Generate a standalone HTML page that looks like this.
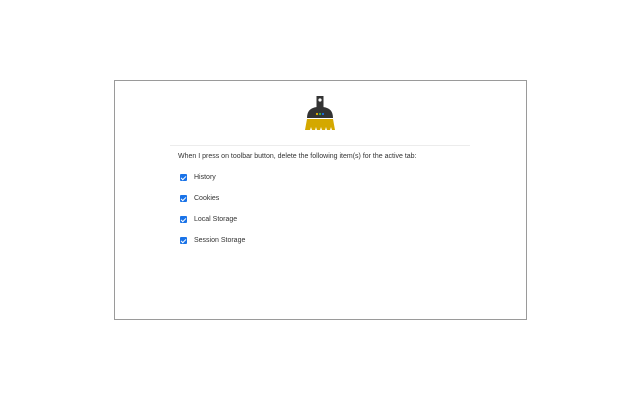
<!DOCTYPE html><html><head><style>
body{margin:0;width:640px;height:400px;background:#fff;position:relative;font-family:"Liberation Sans",sans-serif;}
.f{position:absolute;left:114px;top:80px;width:411px;height:238px;border:1px solid #9a9a9a;}
.sep{position:absolute;left:170px;top:145px;width:300px;height:1px;background:#ececec;}
.t{position:absolute;font-size:7px;color:#333;white-space:nowrap;}
.cb{position:absolute;left:180px;width:7px;height:7px;background:#1a73e8;border-radius:1px;}
.cb:after{content:"";position:absolute;left:2px;top:0.5px;width:2px;height:4px;border:solid #fff;border-width:0 1px 1px 0;transform:rotate(45deg);}
</style></head><body>
<div class="f"></div>
<svg style="position:absolute;left:300px;top:94px" width="40" height="38" viewBox="0 0 40 38">
<path d="M16.5 2h7v12h-7z" fill="#333"/><circle cx="20" cy="6" r="1.6" fill="#fff"/>
<path d="M7 24q0-10 10-11h6q10 1 10 11z" fill="#333"/>
<circle cx="17" cy="20" r="1.1" fill="#e8b400"/><circle cx="20" cy="20" r="1.1" fill="#3ab54a"/><circle cx="23" cy="20" r="1.1" fill="#1a73e8"/>
<path d="M7 25h26l2 11h-3l-1-3-1 3h-3l-1-3-1 3h-3l-1-3-1 3h-3l-1-3-1 3h-3l-1-3-1 3H5z" fill="#d4a800"/>
</svg>
<div class="sep"></div>
<div class="t" style="left:178px;top:153px">When I press on toolbar button, delete the following item(s) for the active tab:</div>
<div class="cb" style="top:174px"></div><div class="t" style="left:194px;top:174px">History</div>
<div class="cb" style="top:195px"></div><div class="t" style="left:194px;top:195px">Cookies</div>
<div class="cb" style="top:216px"></div><div class="t" style="left:194px;top:216px">Local Storage</div>
<div class="cb" style="top:237px"></div><div class="t" style="left:194px;top:237px">Session Storage</div>
</body></html>
